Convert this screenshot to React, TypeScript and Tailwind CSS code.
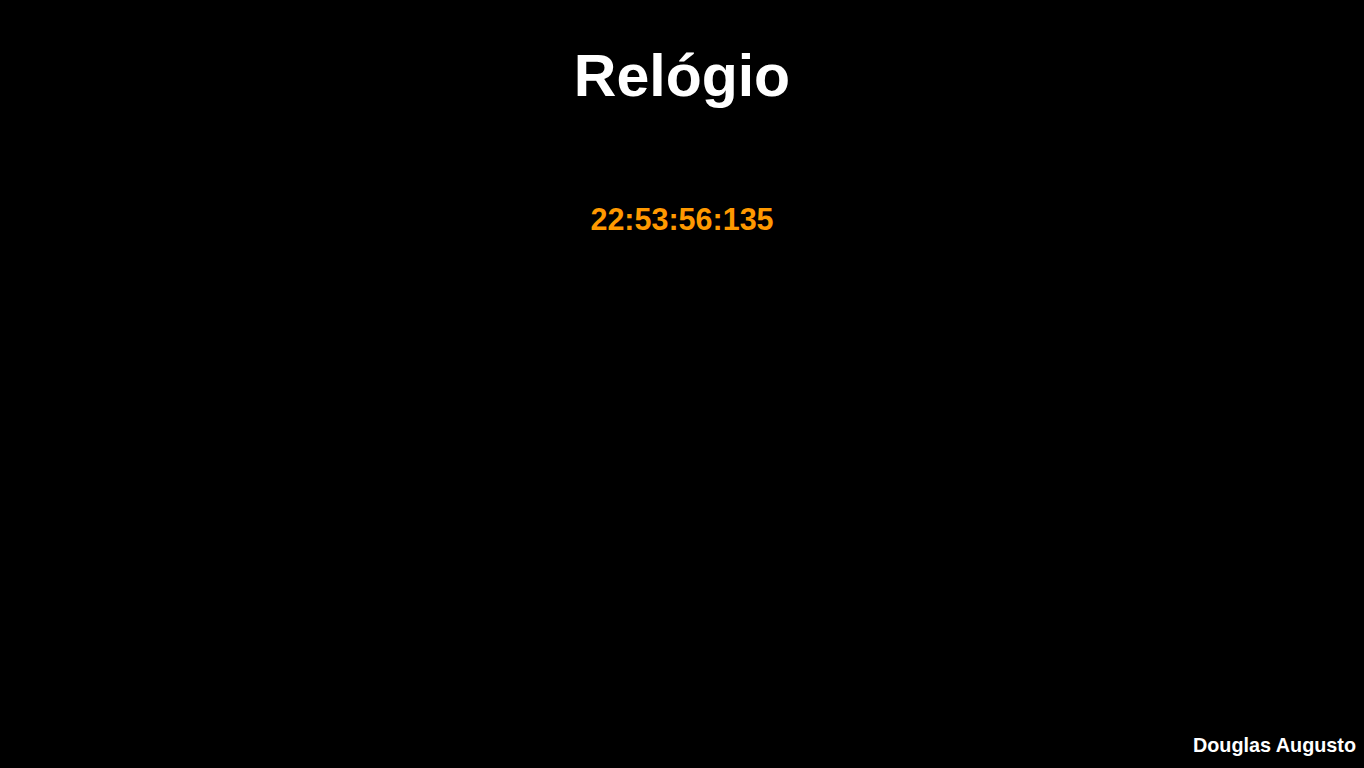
export default function App() {
  return (
    <div
      className="flex h-screen w-full flex-col bg-black text-white"
      style={{ fontFamily: '"Liberation Sans", Arial, sans-serif' }}
    >
      {/* Title */}
      <h1 className="pt-[47px] text-center text-[59px] font-bold leading-none">
        Relógio
      </h1>

      {/* Clock */}
      <div className="mt-[98px] text-center text-[30.5px] font-bold leading-none text-[#ff9900]">
        22:53:56:135
      </div>

      {/* Footer */}
      <footer className="mt-auto flex justify-end pb-[12px] pr-[8px]">
        <span className="text-[19.8px] font-bold leading-none">Douglas Augusto</span>
      </footer>
    </div>
  );
}
